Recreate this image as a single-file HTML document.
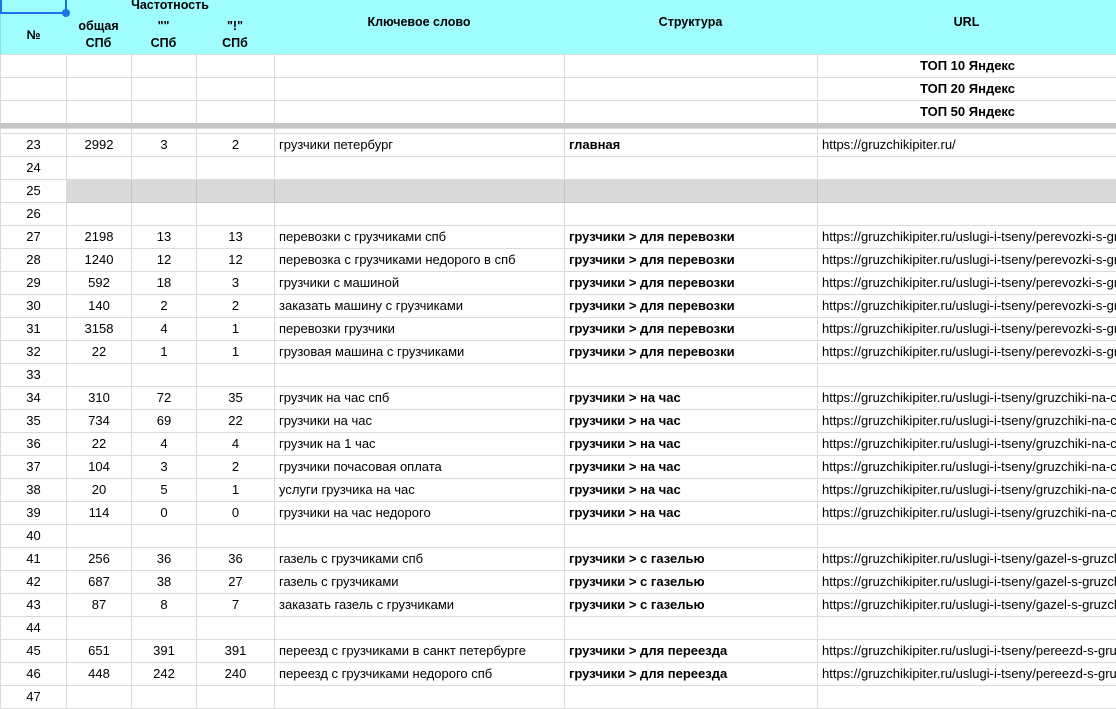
<!DOCTYPE html>
<html><head><meta charset="utf-8"><style>
body{margin:0;width:1116px;height:688px;overflow:hidden;background:#fff;font-family:"Liberation Sans",Arial,sans-serif;font-size:13px;color:#000;position:relative}
.a{position:absolute;box-sizing:border-box}
.h{background:#9ffcff;border-right:1px solid #7fe6ea;border-bottom:1px solid #7fe6ea;font-weight:bold;text-align:center;display:flex;align-items:center;justify-content:center;line-height:17px;font-size:12.5px}
table{position:absolute;left:0;top:128px;border-collapse:collapse;table-layout:fixed;width:1117px}
td{border:1px solid #dadada;height:22px;padding:0 4px;white-space:nowrap;overflow:hidden;box-sizing:border-box;line-height:20px}
td:nth-child(-n+4){text-align:center}
td:nth-child(6){font-weight:bold}
tr.g td:nth-child(n+2){background:#d9d9d9;border-color:#c4c4c4}
.t td{height:23px}
tr.p td{height:5px;line-height:2px;font-size:2px;padding:0}
</style></head><body>
<div class="a h" style="left:0;top:0;width:67px;height:55px;border-left:1px solid #7fe6ea;padding-top:16px">№</div>
<div class="a h" style="left:66px;top:-8px;width:209px;height:22px;padding-top:6px">Частотность</div>
<div class="a h" style="left:66px;top:13px;width:66px;height:42px;padding-top:2px">общая<br>СПб</div>
<div class="a h" style="left:131px;top:13px;width:66px;height:42px;padding-top:2px">""<br>СПб</div>
<div class="a h" style="left:196px;top:13px;width:79px;height:42px;padding-top:2px">"!"<br>СПб</div>
<div class="a h" style="left:274px;top:0;width:291px;height:55px;align-items:flex-start;padding-top:14px">Ключевое слово</div>
<div class="a h" style="left:564px;top:0;width:254px;height:55px;align-items:flex-start;padding-top:14px">Структура</div>
<div class="a h" style="left:817px;top:0;width:300px;height:55px;align-items:flex-start;padding-top:14px">URL</div>
<div class="a" style="left:0;top:-2px;width:67px;height:16px;border:2px solid #1a73e8"></div>
<div class="a" style="left:62px;top:9px;width:8px;height:8px;border-radius:50%;background:#1a73e8"></div>
<table style="top:54px">
<colgroup><col style="width:66px"><col style="width:65px"><col style="width:65px"><col style="width:78px"><col style="width:290px"><col style="width:253px"><col style="width:300px"></colgroup>
<tr class="t"><td></td><td></td><td></td><td></td><td></td><td></td><td style="font-weight:bold;text-align:center">ТОП 10 Яндекс</td></tr>
<tr class="t"><td></td><td></td><td></td><td></td><td></td><td></td><td style="font-weight:bold;text-align:center">ТОП 20 Яндекс</td></tr>
<tr class="t"><td></td><td></td><td></td><td></td><td></td><td></td><td style="font-weight:bold;text-align:center">ТОП 50 Яндекс</td></tr>
</table>
<div class="a" style="left:0;top:123px;width:1116px;height:5px;background:#c6c6c6;z-index:2"></div>
<table>
<colgroup><col style="width:66px"><col style="width:65px"><col style="width:65px"><col style="width:78px"><col style="width:290px"><col style="width:253px"><col style="width:300px"></colgroup>
<tr class="p"><td></td><td></td><td></td><td></td><td></td><td></td><td></td></tr>
<tr class="t"><td>23</td><td>2992</td><td>3</td><td>2</td><td>грузчики петербург</td><td>главная</td><td>https://gruzchikipiter.ru/</td></tr>
<tr class="t"><td>24</td><td></td><td></td><td></td><td></td><td></td><td></td></tr>
<tr class="t g"><td>25</td><td></td><td></td><td></td><td></td><td></td><td></td></tr>
<tr class="t"><td>26</td><td></td><td></td><td></td><td></td><td></td><td></td></tr>
<tr class="t"><td>27</td><td>2198</td><td>13</td><td>13</td><td>перевозки с грузчиками спб</td><td>грузчики &gt; для перевозки</td><td>https://gruzchikipiter.ru/uslugi-i-tseny/perevozki-s-gruzchikami/</td></tr>
<tr class="t"><td>28</td><td>1240</td><td>12</td><td>12</td><td>перевозка с грузчиками недорого в спб</td><td>грузчики &gt; для перевозки</td><td>https://gruzchikipiter.ru/uslugi-i-tseny/perevozki-s-gruzchikami/</td></tr>
<tr class="t"><td>29</td><td>592</td><td>18</td><td>3</td><td>грузчики с машиной</td><td>грузчики &gt; для перевозки</td><td>https://gruzchikipiter.ru/uslugi-i-tseny/perevozki-s-gruzchikami/</td></tr>
<tr class="t"><td>30</td><td>140</td><td>2</td><td>2</td><td>заказать машину с грузчиками</td><td>грузчики &gt; для перевозки</td><td>https://gruzchikipiter.ru/uslugi-i-tseny/perevozki-s-gruzchikami/</td></tr>
<tr class="t"><td>31</td><td>3158</td><td>4</td><td>1</td><td>перевозки грузчики</td><td>грузчики &gt; для перевозки</td><td>https://gruzchikipiter.ru/uslugi-i-tseny/perevozki-s-gruzchikami/</td></tr>
<tr class="t"><td>32</td><td>22</td><td>1</td><td>1</td><td>грузовая машина с грузчиками</td><td>грузчики &gt; для перевозки</td><td>https://gruzchikipiter.ru/uslugi-i-tseny/perevozki-s-gruzchikami/</td></tr>
<tr class="t"><td>33</td><td></td><td></td><td></td><td></td><td></td><td></td></tr>
<tr class="t"><td>34</td><td>310</td><td>72</td><td>35</td><td>грузчик на час спб</td><td>грузчики &gt; на час</td><td>https://gruzchikipiter.ru/uslugi-i-tseny/gruzchiki-na-chas/</td></tr>
<tr class="t"><td>35</td><td>734</td><td>69</td><td>22</td><td>грузчики на час</td><td>грузчики &gt; на час</td><td>https://gruzchikipiter.ru/uslugi-i-tseny/gruzchiki-na-chas/</td></tr>
<tr class="t"><td>36</td><td>22</td><td>4</td><td>4</td><td>грузчик на 1 час</td><td>грузчики &gt; на час</td><td>https://gruzchikipiter.ru/uslugi-i-tseny/gruzchiki-na-chas/</td></tr>
<tr class="t"><td>37</td><td>104</td><td>3</td><td>2</td><td>грузчики почасовая оплата</td><td>грузчики &gt; на час</td><td>https://gruzchikipiter.ru/uslugi-i-tseny/gruzchiki-na-chas/</td></tr>
<tr class="t"><td>38</td><td>20</td><td>5</td><td>1</td><td>услуги грузчика на час</td><td>грузчики &gt; на час</td><td>https://gruzchikipiter.ru/uslugi-i-tseny/gruzchiki-na-chas/</td></tr>
<tr class="t"><td>39</td><td>114</td><td>0</td><td>0</td><td>грузчики на час недорого</td><td>грузчики &gt; на час</td><td>https://gruzchikipiter.ru/uslugi-i-tseny/gruzchiki-na-chas/</td></tr>
<tr class="t"><td>40</td><td></td><td></td><td></td><td></td><td></td><td></td></tr>
<tr class="t"><td>41</td><td>256</td><td>36</td><td>36</td><td>газель с грузчиками спб</td><td>грузчики &gt; с газелью</td><td>https://gruzchikipiter.ru/uslugi-i-tseny/gazel-s-gruzchikami/</td></tr>
<tr class="t"><td>42</td><td>687</td><td>38</td><td>27</td><td>газель с грузчиками</td><td>грузчики &gt; с газелью</td><td>https://gruzchikipiter.ru/uslugi-i-tseny/gazel-s-gruzchikami/</td></tr>
<tr class="t"><td>43</td><td>87</td><td>8</td><td>7</td><td>заказать газель с грузчиками</td><td>грузчики &gt; с газелью</td><td>https://gruzchikipiter.ru/uslugi-i-tseny/gazel-s-gruzchikami/</td></tr>
<tr class="t"><td>44</td><td></td><td></td><td></td><td></td><td></td><td></td></tr>
<tr class="t"><td>45</td><td>651</td><td>391</td><td>391</td><td>переезд с грузчиками в санкт петербурге</td><td>грузчики &gt; для переезда</td><td>https://gruzchikipiter.ru/uslugi-i-tseny/pereezd-s-gruzchikami/</td></tr>
<tr class="t"><td>46</td><td>448</td><td>242</td><td>240</td><td>переезд с грузчиками недорого спб</td><td>грузчики &gt; для переезда</td><td>https://gruzchikipiter.ru/uslugi-i-tseny/pereezd-s-gruzchikami/</td></tr>
<tr class="t"><td>47</td><td></td><td></td><td></td><td></td><td></td><td></td></tr>
</table>
</body></html>
